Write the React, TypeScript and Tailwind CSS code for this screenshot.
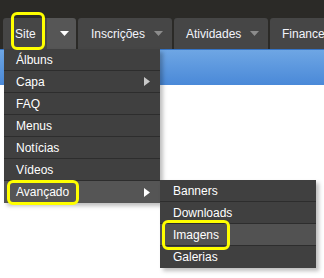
import React from "react";

function DownTri({ color }: { color: string }) {
  return (
    <svg width="9" height="5" viewBox="0 0 9 5">
      <polygon points="0,0 9,0 4.5,5" fill={color} />
    </svg>
  );
}

function RightTri({ color }: { color: string }) {
  return (
    <svg width="6" height="9" viewBox="0 0 6 9">
      <polygon points="0,0 6,4.5 0,9" fill={color} />
    </svg>
  );
}

export default function App() {
  const main = ["Álbuns", "Capa", "FAQ", "Menus", "Notícias", "Vídeos", "Avançado"];
  const sub = ["Banners", "Downloads", "Imagens", "Galerias"];
  return (
    <div className="relative w-[324px] h-[278px] overflow-hidden bg-white font-['Liberation_Sans',Arial,sans-serif] text-[12px] font-normal">
      <div className="h-[18px] bg-[#2b2a27]" />
      <div className="flex h-[31px] bg-[#2b2a27] pl-[3px] gap-[2px]">
        <div className="flex shrink-0">
          <div className="w-[44px] shrink-0 bg-[#464646] rounded-tl-[3px] flex items-center pl-[12px] text-[#f2f4fb]">Site</div>
          <div className="w-[29px] shrink-0 bg-[#565656] rounded-tr-[3px] flex items-center pl-[13px]">
            <DownTri color="#ffffff" />
          </div>
        </div>
        <div className="w-[94px] shrink-0 bg-[#464646] rounded-t-[3px] flex items-center pl-[13px] text-[#f2f4fb]">
          <span>Inscrições</span>
          <span className="ml-[9px] flex"><DownTri color="#8c8c8c" /></span>
        </div>
        <div className="w-[94px] shrink-0 bg-[#464646] rounded-t-[3px] flex items-center pl-[12px] text-[#f2f4fb]">
          <span>Atividades</span>
          <span className="ml-[9px] flex"><DownTri color="#8c8c8c" /></span>
        </div>
        <div className="w-[94px] shrink-0 bg-[#464646] rounded-t-[3px] flex items-center pl-[12px] text-[#f2f4fb] whitespace-nowrap">
          Financeiro
        </div>
      </div>
      <div className="h-[36px] bg-gradient-to-b from-[#6ea6e4] to-[#4a89d8] border-t border-[#3574c6]" />

      {/* main dropdown */}
      <div className="absolute left-[4px] top-[49px] w-[156px] bg-[#404040] shadow-[3px_3px_4px_rgba(0,0,0,0.25)]">
        {main.map((m, i) => (
          <div
            key={m}
            className={`h-[22px] flex items-center justify-between pl-[12px] pr-[10px] text-white ${
              i < main.length - 1 ? "border-b border-[#2d2d2d]" : ""
            } ${m === "Avançado" ? "bg-[#555555]" : ""}`}
          >
            <span>{m}</span>
            {m === "Capa" && <RightTri color="#c8c8c8" />}
            {m === "Avançado" && <RightTri color="#ffffff" />}
          </div>
        ))}
      </div>

      {/* sub dropdown */}
      <div className="absolute left-[160px] top-[180px] w-[156px] bg-[#404040] shadow-[3px_3px_4px_rgba(0,0,0,0.25)]">
        {sub.map((s, i) => (
          <div
            key={s}
            className={`h-[22px] flex items-center pl-[13px] text-white ${
              i < sub.length - 1 ? "border-b border-[#2d2d2d]" : ""
            } ${s === "Imagens" ? "bg-[#525252]" : ""}`}
          >
            {s}
          </div>
        ))}
      </div>

      {/* highlights */}
      <div className="absolute left-[11px] top-[12px] w-[34px] h-[38px] border-[3px] border-[#ffff00] rounded-[6px]" />
      <div className="absolute left-[7px] top-[180px] w-[72px] h-[25px] border-[3px] border-[#ffff00] rounded-[6px]" />
      <div className="absolute left-[162px] top-[220px] w-[68px] h-[30px] border-[3px] border-[#ffff00] rounded-[6px]" />
    </div>
  );
}
